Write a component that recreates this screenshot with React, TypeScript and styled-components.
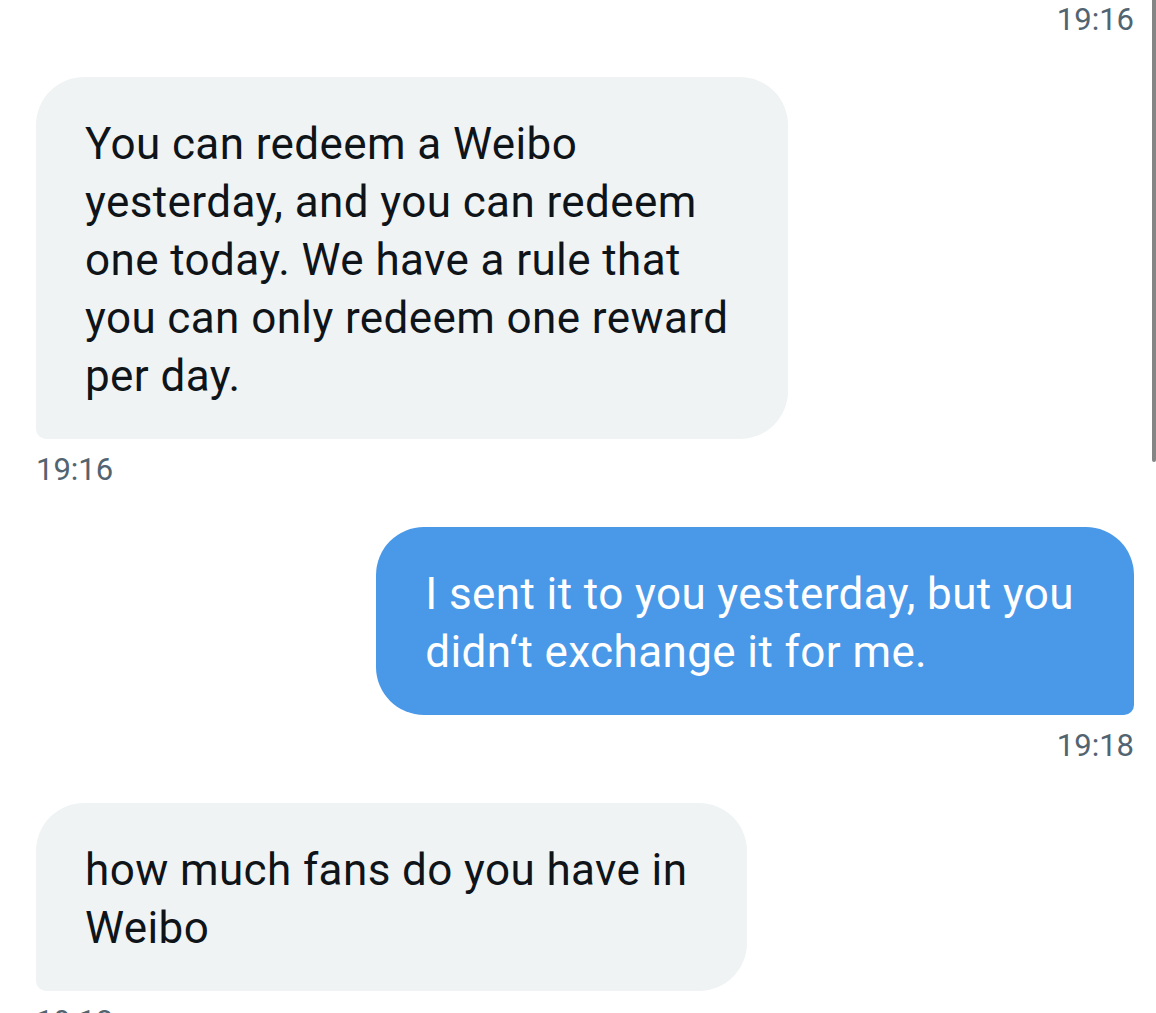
import React from "react";
import styled, { createGlobalStyle } from "styled-components";

const Global = createGlobalStyle`
  html, body {
    margin: 0;
    padding: 0;
    background: #ffffff;
  }
  body {
    font-family: Roboto, "Liberation Sans", Arial, sans-serif;
    -webkit-font-smoothing: antialiased;
  }
`;

const Screen = styled.div`
  position: relative;
  width: 1156px;
  height: 1013px;
  overflow: hidden;
  background: #ffffff;
`;

const Thread = styled.div`
  display: flex;
  flex-direction: column;
  padding: 1px 22px 0 36px;
  gap: 38px;
`;

const Group = styled.div<{ $mine?: boolean }>`
  display: flex;
  flex-direction: column;
  align-items: ${(p) => (p.$mine ? "flex-end" : "flex-start")};
  gap: 12px;
`;

const Bubble = styled.div<{ $mine?: boolean }>`
  box-sizing: border-box;
  padding: 38px 60px 34px 49px;
  font-size: 44px;
  line-height: 58px;
  letter-spacing: 0.4px;
  white-space: nowrap;
  color: ${(p) => (p.$mine ? "#ffffff" : "#0f1419")};
  background: ${(p) => (p.$mine ? "#4a99e8" : "#eff3f4")};
  border-radius: ${(p) => (p.$mine ? "48px 48px 10px 48px" : "48px 48px 48px 10px")};
`;

const Time = styled.div`
  font-size: 31px;
  line-height: 38px;
  color: #536471;
`;

const ScrollThumb = styled.div`
  position: absolute;
  top: 0;
  right: 0;
  width: 4px;
  height: 462px;
  background: #858585;
  border-radius: 0 0 2px 2px;
`;

type Msg = { mine?: boolean; lines: string[]; time: string };

const messages: Msg[] = [
  {
    lines: [
      "You can redeem a Weibo",
      "yesterday, and you can redeem",
      "one today. We have a rule that",
      "you can only redeem one reward",
      "per day.",
    ],
    time: "19:16",
  },
  {
    mine: true,
    lines: ["I sent it to you yesterday, but you", "didn\u2018t exchange it for me."],
    time: "19:18",
  },
  {
    lines: ["how much fans do you have in", "Weibo"],
    time: "19:18",
  },
];

export default function App() {
  return (
    <Screen>
      <Global />
      <Thread>
        <Group $mine>
          <Time>19:16</Time>
        </Group>
        {messages.map((m, i) => (
          <Group key={i} $mine={m.mine}>
            <Bubble $mine={m.mine}>
              {m.lines.map((l, j) => (
                <React.Fragment key={j}>
                  {l}
                  {j < m.lines.length - 1 && <br />}
                </React.Fragment>
              ))}
            </Bubble>
            <Time>{m.time}</Time>
          </Group>
        ))}
      </Thread>
      <ScrollThumb />
    </Screen>
  );
}
